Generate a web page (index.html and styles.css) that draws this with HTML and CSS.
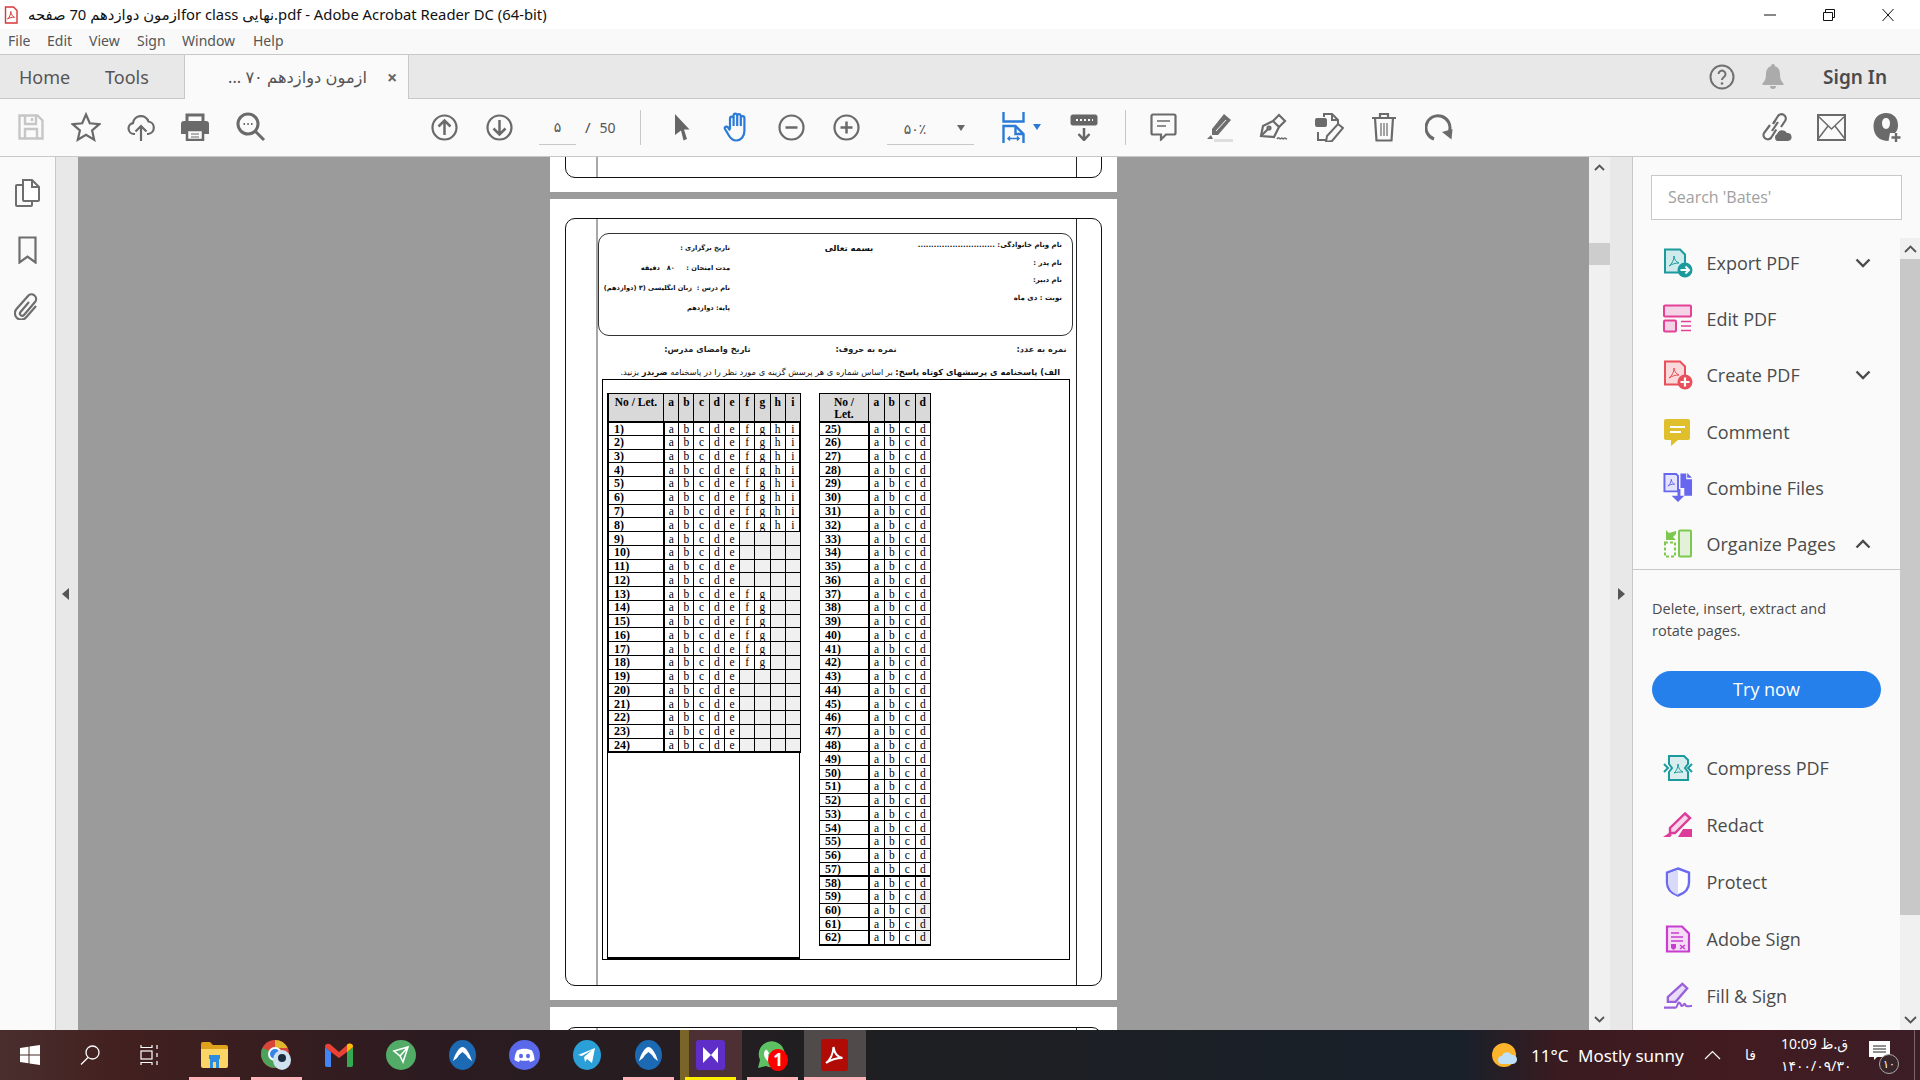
FILE: index.html
```html
<!DOCTYPE html>
<html lang="en">
<head>
<meta charset="utf-8">
<title>Adobe Acrobat Reader DC</title>
<link rel="stylesheet" href="styles.css">
</head>
<body>
<div class="app">
  <header class="titlebar">
    <svg class="title-icon" width="14" height="18" viewBox="0 0 14 18"><path d="M1.5 1h8l3.500 3.500V17h-11.500z" fill="#fff" stroke="#d8363a" stroke-width="1.400"/><path d="M3.500 13c2-1.500 3.200-4.500 3.300-7.500.5 3 1.700 5 3.700 5.800-2.500-.3-5 .3-7 1.700z" fill="none" stroke="#d8363a"/></svg>
    <span class="title-text">ازمون دوازدهم 70 صفحهfor class نهایی.pdf - Adobe Acrobat Reader DC (64-bit)</span>
    <div class="win-controls">
      <svg width="14" height="12" viewBox="0 0 14 12"><path d="M1 6h12" stroke="#111" fill="none"/></svg>
      <svg width="14" height="12" viewBox="0 0 14 12"><path d="M1.500 3.500h9v8h-9zM3.500 3.500v-3h9v8h-2" stroke="#111" fill="none"/></svg>
      <svg width="14" height="12" viewBox="0 0 14 12"><path d="M1.500 0l11 12M12.500 0l-11 12" stroke="#111" fill="none"/></svg>
    </div>
  </header>

  <nav class="menubar">
    <span class="m-file">File</span><span class="m-edit">Edit</span><span class="m-view">View</span><span class="m-sign">Sign</span><span class="m-window">Window</span><span>Help</span>
  </nav>

  <div class="tabbar">
    <span class="nav-home">Home</span>
    <span class="nav-tools">Tools</span>
    <div class="doc-tab"><span class="doc-name" dir="rtl">ازمون دوازدهم ۷۰ ...</span><span class="doc-close">×</span></div>
    <div class="tab-right">
      <svg width="26" height="26" viewBox="0 0 26 26"><circle cx="13" cy="13" r="11.500" fill="none" stroke="#707070" stroke-width="2"/><path d="M9.500 10a3.500 3.500 0 1 1 5.500 3c-1.300.9-2 1.500-2 3" fill="none" stroke="#707070" stroke-width="2"/><circle cx="13" cy="19.500" r="1.300" fill="#707070"/></svg>
      <svg class="bell" width="22" height="26" viewBox="0 0 22 26"><path d="M11 0c1.300 0 2 1 2 2.200 3.500 1 5 4 5 8 0 5 1.500 7 3.500 9.300v1.500H.5v-1.500C2.500 17.200 4 15.200 4 10.200c0-4 1.500-7 5-8C9 1 9.700 0 11 0z" fill="#ababab"/><path d="M8 22h6a3 3 0 0 1-6 0z" fill="#ababab"/></svg>
      <span class="sign-in">Sign In</span>
    </div>
  </div>

  <div class="toolbar">
    <span class="tb"><svg width="28" height="28" viewBox="0 0 28 28" class="ic-off"><path d="M2.500 2.500h18l5 5v18h-23z"/><path d="M8 2.500V11h11V2.500M8 25.500V16h12v9.500M15 5v3"/></svg></span>
    <span class="tb"><svg width="30" height="30" viewBox="0 0 30 30" class="ic"><path d="M15 2.500l3.800 8.800 9.500.9-7.200 6.300 2.100 9.300-8.200-4.900-8.200 4.900 2.100-9.300-7.200-6.300 9.500-.9z"/></svg></span>
    <span class="tb"><svg width="28" height="30" viewBox="0 0 28 30" class="ic"><path d="M8 22H7a5.500 5.500 0 0 1-1-10.900A8 8 0 0 1 21.500 9.500 6.300 6.300 0 0 1 21 22h-1"/><path d="M14 29V14M8.500 19.500l5.500-5.500 5.500 5.500"/></svg></span>
    <span class="tb tb-print"><svg width="28" height="28" viewBox="0 0 28 28"><path d="M6 9V2h16v7" fill="none" stroke="#6a6a6a" stroke-width="3"/><path d="M3 8h22a3 3 0 0 1 3 3v10h-5v-5H5v5H0V11a3 3 0 0 1 3-3z" fill="#6a6a6a"/><path d="M6 17h16v10H6z" fill="#fafafa" stroke="#6a6a6a" stroke-width="2.500"/><path d="M10 21h8M10 24h8" stroke="#6a6a6a"/></svg></span>
    <span class="tb"><svg width="30" height="30" viewBox="0 0 30 30" class="ic ic-heavy"><circle cx="12" cy="12" r="10"/><path d="M19 19l9 9"/><path d="M7.500 12h1.500M11.300 12h1.500M15 12h1.500" stroke-width="2"/></svg></span>
    <span class="tb gap-nav"><svg width="27" height="27" viewBox="0 0 27 27" class="ic"><circle cx="13.500" cy="13.500" r="12"/><path d="M13.500 21V7M7.500 12.500l6-6 6 6" stroke-width="2.500"/></svg></span>
    <span class="tb"><svg width="27" height="27" viewBox="0 0 27 27" class="ic"><circle cx="13.500" cy="13.500" r="12"/><path d="M13.500 6v14M7.500 14.500l6 6 6-6" stroke-width="2.500"/></svg></span>
    <div class="page-box"><span class="page-num">۵</span></div>
    <span class="page-total">/</span><span class="page-count">50</span>
    <span class="tb-divider divider-a"></span>
    <span class="tb"><svg width="16" height="27" viewBox="0 0 16 27"><path d="M1 0l14.500 15.500H10l3 9.500-3.500 1.500-2.500-10L1 21z" fill="#666"/></svg></span>
    <span class="tb"><svg width="28" height="30" viewBox="0 0 28 30" fill="none" stroke="#2b7bd6" stroke-width="2.200"><path d="M7 17V6.500a1.800 1.800 0 0 1 3.600 0M10.600 14V3.500a1.800 1.800 0 0 1 3.600 0V14M14.200 4a1.800 1.800 0 0 1 3.600 0v10M17.800 6a1.800 1.800 0 0 1 3.600 0v13c0 5.500-3.500 9.500-8 9.500-3.500 0-5.500-1.500-7.500-5L2 17c-1-2 1.500-3.500 3-1.500L7 18.500"/></svg></span>
    <span class="tb"><svg width="27" height="27" viewBox="0 0 27 27" class="ic"><circle cx="13.500" cy="13.500" r="12"/><path d="M7.500 13.500h12" stroke-width="2.500"/></svg></span>
    <span class="tb"><svg width="27" height="27" viewBox="0 0 27 27" class="ic"><circle cx="13.500" cy="13.500" r="12"/><path d="M7.500 13.500h12M13.500 7.500v12" stroke-width="2.500"/></svg></span>
    <div class="zoom-box"><span class="zoom-val">۵۰٪</span><span class="caret"></span></div>
    <span class="fit"><svg width="23" height="31" viewBox="0 0 23 31" fill="none" stroke="#2b7bd6" stroke-width="2.400"><path d="M1.500 0v9.500h20V0"/><path d="M1.500 31V14h12l8 8v9M13.500 14v8h8"/><path d="M6 26.500h11M8 24.500l-2 2 2 2M15 24.500l2 2-2 2" stroke-width="1.500"/></svg><span class="caret caret-blue"></span></span>
    <span class="tb read"><svg width="28" height="27" viewBox="0 0 28 27" fill="none" stroke="#666"><rect x="1" y="1" width="26" height="10" rx="1.500" fill="#666"/><path d="M6 6h2M10 6h2M14 6h2M18 6h2M22 6h1" stroke="#fafafa" stroke-width="2"/><path d="M14 14v12M8.500 20l5.500 6 5.500-6" stroke-width="2.500"/></svg></span>
    <span class="tb-divider divider-b"></span>
    <span class="tb"><svg width="27" height="28" viewBox="0 0 27 28" class="ic"><path d="M3 1.500h21a1.500 1.500 0 0 1 1.500 1.500v17a1.500 1.500 0 0 1-1.500 1.500h-8L11 26.500v-5H3A1.500 1.500 0 0 1 1.500 20V3A1.500 1.500 0 0 1 3 1.500z"/><path d="M7 8h13M7 13h9" stroke-width="1.500"/></svg></span>
    <span class="tb"><svg width="29" height="29" viewBox="0 0 29 29"><path d="M20 1l7 6-13 15h-6v-6z" fill="#6e6e6e"/><path d="M7 22l-4 4h6z" fill="#6e6e6e"/><path d="M10 26h19v3H10z" fill="#dedede"/><path d="M22 7L12 18" stroke="#fafafa"/></svg></span>
    <span class="tb"><svg width="29" height="29" viewBox="0 0 29 29" class="ic"><path d="M2 23l2-10 10-5 6 6-5 10z"/><path d="M14 8l6-6 6 6-6 6M2 23l7-7"/><circle cx="10" cy="15" r="1.500"/><path d="M18 26c2-3 2.500 1 4-.5s1.500 1.500 3 0 1 1 3 0" stroke-width="1.500"/></svg></span>
    <span class="tb"><svg width="30" height="30" viewBox="0 0 30 30"><path d="M10 5V2h8l6 6v4M4 20v8h9" fill="none" stroke="#6a6a6a" stroke-width="2"/><path d="M18 2v6h6" fill="none" stroke="#6a6a6a" stroke-width="2"/><rect x="1" y="6" width="12" height="9" rx="2" fill="#6a6a6a"/><path d="M24 12l5 4-11 13-6 1 1-6z" fill="#fafafa" stroke="#6a6a6a" stroke-width="2"/></svg></span>
    <span class="tb"><svg width="26" height="30" viewBox="0 0 26 30" class="ic"><path d="M1 6h24M9 6V2h8v4M4 6l1.500 22.500h15L22 6"/><path d="M10 11v13M13 11v13M16 11v13" stroke-width="1.200"/></svg></span>
    <span class="tb"><svg width="28" height="28" viewBox="0 0 28 28"><path d="M9 26A12 12 0 1 1 24.500 18" fill="none" stroke="#6a6a6a" stroke-width="3"/><path d="M17 19l10.500-3-1 10.500z" fill="#6a6a6a"/></svg></span>
    <div class="tb-right">
      <span class="tb"><svg width="31" height="30" viewBox="0 0 31 30"><g fill="none" stroke="#6a6a6a" stroke-width="2.200"><path d="M12 12l5-8a4.300 4.300 0 0 1 7.300 4.500L20 15"/><path d="M14 9l-1.500 2M9 13l-6 8a4.300 4.300 0 0 0 7.300 4.500l5-8"/><path d="M11 19l6-9"/></g><path d="M16 29a4 4 0 0 1 0-7 5.500 5.500 0 0 1 10-1 4 4 0 0 1 1 8z" fill="#6a6a6a"/></svg></span>
      <span class="tb"><svg width="29" height="27" viewBox="0 0 29 27" fill="none" stroke="#6a6a6a" stroke-width="2"><rect x="1" y="1" width="27" height="25"/><path d="M1 2l13.500 13L28 2M1 25l10-13M28 25L18 12" stroke-width="1.500"/></svg></span>
      <span class="tb"><svg width="29" height="31" viewBox="0 0 29 31"><path d="M14 1c7 0 12 4.800 12 12 0 3.500-1 6.500-3 8h-5l-1.500 8C8 29 1.500 24 1.500 14 1.500 6 7 1 14 1z" fill="#6a6a6a"/><path d="M14 6c2.500 0 4 2 4 5s-1.500 6-4 6-4-3-4-6 1.500-5 4-5z" fill="#fafafa"/><path d="M24 21v9M19.500 25.500h9" stroke="#6a6a6a" stroke-width="2.400"/></svg></span>
    </div>
  </div>

  <main class="workspace">
    <aside class="rail">
      <svg width="25" height="28" viewBox="0 0 25 28" fill="none" stroke="#6e6e6e" stroke-width="2"><path d="M8 6H2a1 1 0 0 0-1 1v19a1 1 0 0 0 1 1h14a1 1 0 0 0 1-1v-4"/><path d="M8 1h9l7 7v13a1 1 0 0 1-1 1H9a1 1 0 0 1-1-1z" fill="#fff"/><path d="M17 1v7h7"/></svg>
      <svg width="19" height="28" viewBox="0 0 19 28" fill="none" stroke="#6e6e6e" stroke-width="2.200"><path d="M1.500 1.500h16v25l-8-6-8 6z"/></svg>
      <svg width="26" height="27" viewBox="0 0 26 27" fill="none" stroke="#6e6e6e" stroke-width="2.200"><path d="M15 9L6.500 19a2.300 2.300 0 0 0 3.500 3l11-13a4.500 4.500 0 0 0-7-6L2.500 16a6.300 6.300 0 0 0 9.500 8.500L22 13"/></svg>
    </aside>
    <div class="side-strip"><span class="arrow-left"></span></div>

    <section class="viewer">
      <div class="page page-top"><div class="frame"><div class="frame-in"></div></div></div>

      <div class="page page-main">
        <div class="frame">
          <div class="frame-in">
            <div class="head-box" dir="rtl">
              <div class="head-col">
                <p>نام ونام خانوادگی: .............................</p>
                <p>نام پدر :</p>
                <p>نام دبیر:</p>
                <p>نوبت : دی ماه</p>
              </div>
              <div class="head-mid">بسمه تعالی</div>
              <div class="head-col head-left">
                <p>تاریخ برگزاری :</p>
                <p>مدت امتحان :&nbsp;&nbsp;&nbsp;&nbsp;&nbsp;۸۰&nbsp;&nbsp;&nbsp;دقیقه</p>
                <p>نام درس :&nbsp;&nbsp;زبان انگلیسی (۳ (دوازدهم)</p>
                <p>پایه: دوازدهم</p>
              </div>
            </div>
            <div class="score-line" dir="rtl"><span>نمره به عدد:</span><span>نمره به حروف:</span><span>تاریخ وامضای مدرس:</span></div>
            <p class="instr" dir="rtl"><b>الف) پاسخنامه ی پرسشهای کوتاه پاسخ:</b> بر اساس شماره ی هر پرسش گزینه ی مورد نظر را در پاسخنامه <b>ضربدر</b> بزنید.</p>
            <div class="sheet">
              <div class="sheet-left">
                <table class="answers answers-a">
                  <thead><tr><th>No / Let.</th><th>a</th><th>b</th><th>c</th><th>d</th><th>e</th><th>f</th><th>g</th><th>h</th><th>i</th></tr></thead>
                  <tbody>
                    <tr><th>1)</th><td>a</td><td>b</td><td>c</td><td>d</td><td>e</td><td>f</td><td>g</td><td>h</td><td>i</td></tr>
                    <tr><th>2)</th><td>a</td><td>b</td><td>c</td><td>d</td><td>e</td><td>f</td><td>g</td><td>h</td><td>i</td></tr>
                    <tr><th>3)</th><td>a</td><td>b</td><td>c</td><td>d</td><td>e</td><td>f</td><td>g</td><td>h</td><td>i</td></tr>
                    <tr><th>4)</th><td>a</td><td>b</td><td>c</td><td>d</td><td>e</td><td>f</td><td>g</td><td>h</td><td>i</td></tr>
                    <tr><th>5)</th><td>a</td><td>b</td><td>c</td><td>d</td><td>e</td><td>f</td><td>g</td><td>h</td><td>i</td></tr>
                    <tr><th>6)</th><td>a</td><td>b</td><td>c</td><td>d</td><td>e</td><td>f</td><td>g</td><td>h</td><td>i</td></tr>
                    <tr><th>7)</th><td>a</td><td>b</td><td>c</td><td>d</td><td>e</td><td>f</td><td>g</td><td>h</td><td>i</td></tr>
                    <tr><th>8)</th><td>a</td><td>b</td><td>c</td><td>d</td><td>e</td><td>f</td><td>g</td><td>h</td><td>i</td></tr>
                    <tr><th>9)</th><td>a</td><td>b</td><td>c</td><td>d</td><td>e</td><td class="x"></td><td class="x"></td><td class="x"></td><td class="x"></td></tr>
                    <tr><th>10)</th><td>a</td><td>b</td><td>c</td><td>d</td><td>e</td><td class="x"></td><td class="x"></td><td class="x"></td><td class="x"></td></tr>
                    <tr><th>11)</th><td>a</td><td>b</td><td>c</td><td>d</td><td>e</td><td class="x"></td><td class="x"></td><td class="x"></td><td class="x"></td></tr>
                    <tr><th>12)</th><td>a</td><td>b</td><td>c</td><td>d</td><td>e</td><td class="x"></td><td class="x"></td><td class="x"></td><td class="x"></td></tr>
                    <tr><th>13)</th><td>a</td><td>b</td><td>c</td><td>d</td><td>e</td><td>f</td><td>g</td><td class="x"></td><td class="x"></td></tr>
                    <tr><th>14)</th><td>a</td><td>b</td><td>c</td><td>d</td><td>e</td><td>f</td><td>g</td><td class="x"></td><td class="x"></td></tr>
                    <tr><th>15)</th><td>a</td><td>b</td><td>c</td><td>d</td><td>e</td><td>f</td><td>g</td><td class="x"></td><td class="x"></td></tr>
                    <tr><th>16)</th><td>a</td><td>b</td><td>c</td><td>d</td><td>e</td><td>f</td><td>g</td><td class="x"></td><td class="x"></td></tr>
                    <tr><th>17)</th><td>a</td><td>b</td><td>c</td><td>d</td><td>e</td><td>f</td><td>g</td><td class="x"></td><td class="x"></td></tr>
                    <tr><th>18)</th><td>a</td><td>b</td><td>c</td><td>d</td><td>e</td><td>f</td><td>g</td><td class="x"></td><td class="x"></td></tr>
                    <tr><th>19)</th><td>a</td><td>b</td><td>c</td><td>d</td><td>e</td><td class="x"></td><td class="x"></td><td class="x"></td><td class="x"></td></tr>
                    <tr><th>20)</th><td>a</td><td>b</td><td>c</td><td>d</td><td>e</td><td class="x"></td><td class="x"></td><td class="x"></td><td class="x"></td></tr>
                    <tr><th>21)</th><td>a</td><td>b</td><td>c</td><td>d</td><td>e</td><td class="x"></td><td class="x"></td><td class="x"></td><td class="x"></td></tr>
                    <tr><th>22)</th><td>a</td><td>b</td><td>c</td><td>d</td><td>e</td><td class="x"></td><td class="x"></td><td class="x"></td><td class="x"></td></tr>
                    <tr><th>23)</th><td>a</td><td>b</td><td>c</td><td>d</td><td>e</td><td class="x"></td><td class="x"></td><td class="x"></td><td class="x"></td></tr>
                    <tr><th>24)</th><td>a</td><td>b</td><td>c</td><td>d</td><td>e</td><td class="x"></td><td class="x"></td><td class="x"></td><td class="x"></td></tr>
                  </tbody>
                </table>
              </div>
              <table class="answers answers-b">
                <thead><tr><th>No / Let.</th><th>a</th><th>b</th><th>c</th><th>d</th></tr></thead>
                <tbody>
                  <tr><th>25)</th><td>a</td><td>b</td><td>c</td><td>d</td></tr>
                  <tr><th>26)</th><td>a</td><td>b</td><td>c</td><td>d</td></tr>
                  <tr><th>27)</th><td>a</td><td>b</td><td>c</td><td>d</td></tr>
                  <tr><th>28)</th><td>a</td><td>b</td><td>c</td><td>d</td></tr>
                  <tr><th>29)</th><td>a</td><td>b</td><td>c</td><td>d</td></tr>
                  <tr><th>30)</th><td>a</td><td>b</td><td>c</td><td>d</td></tr>
                  <tr><th>31)</th><td>a</td><td>b</td><td>c</td><td>d</td></tr>
                  <tr><th>32)</th><td>a</td><td>b</td><td>c</td><td>d</td></tr>
                  <tr><th>33)</th><td>a</td><td>b</td><td>c</td><td>d</td></tr>
                  <tr><th>34)</th><td>a</td><td>b</td><td>c</td><td>d</td></tr>
                  <tr><th>35)</th><td>a</td><td>b</td><td>c</td><td>d</td></tr>
                  <tr><th>36)</th><td>a</td><td>b</td><td>c</td><td>d</td></tr>
                  <tr><th>37)</th><td>a</td><td>b</td><td>c</td><td>d</td></tr>
                  <tr><th>38)</th><td>a</td><td>b</td><td>c</td><td>d</td></tr>
                  <tr><th>39)</th><td>a</td><td>b</td><td>c</td><td>d</td></tr>
                  <tr><th>40)</th><td>a</td><td>b</td><td>c</td><td>d</td></tr>
                  <tr><th>41)</th><td>a</td><td>b</td><td>c</td><td>d</td></tr>
                  <tr><th>42)</th><td>a</td><td>b</td><td>c</td><td>d</td></tr>
                  <tr><th>43)</th><td>a</td><td>b</td><td>c</td><td>d</td></tr>
                  <tr><th>44)</th><td>a</td><td>b</td><td>c</td><td>d</td></tr>
                  <tr><th>45)</th><td>a</td><td>b</td><td>c</td><td>d</td></tr>
                  <tr><th>46)</th><td>a</td><td>b</td><td>c</td><td>d</td></tr>
                  <tr><th>47)</th><td>a</td><td>b</td><td>c</td><td>d</td></tr>
                  <tr><th>48)</th><td>a</td><td>b</td><td>c</td><td>d</td></tr>
                  <tr><th>49)</th><td>a</td><td>b</td><td>c</td><td>d</td></tr>
                  <tr><th>50)</th><td>a</td><td>b</td><td>c</td><td>d</td></tr>
                  <tr><th>51)</th><td>a</td><td>b</td><td>c</td><td>d</td></tr>
                  <tr><th>52)</th><td>a</td><td>b</td><td>c</td><td>d</td></tr>
                  <tr><th>53)</th><td>a</td><td>b</td><td>c</td><td>d</td></tr>
                  <tr><th>54)</th><td>a</td><td>b</td><td>c</td><td>d</td></tr>
                  <tr><th>55)</th><td>a</td><td>b</td><td>c</td><td>d</td></tr>
                  <tr><th>56)</th><td>a</td><td>b</td><td>c</td><td>d</td></tr>
                  <tr><th>57)</th><td>a</td><td>b</td><td>c</td><td>d</td></tr>
                  <tr class="thick"><th>58)</th><td>a</td><td>b</td><td>c</td><td>d</td></tr>
                  <tr><th>59)</th><td>a</td><td>b</td><td>c</td><td class="x">d</td></tr>
                  <tr><th>60)</th><td>a</td><td>b</td><td>c</td><td class="x">d</td></tr>
                  <tr><th>61)</th><td>a</td><td>b</td><td>c</td><td class="x">d</td></tr>
                  <tr><th>62)</th><td>a</td><td>b</td><td>c</td><td class="x">d</td></tr>
                </tbody>
              </table>
            </div>
          </div>
        </div>
      </div>

      <div class="page page-next"><div class="frame"><div class="frame-in"></div></div></div>
    </section>

    <div class="scroll scroll-doc">
      <span class="scroll-btn"><svg width="11" height="7" viewBox="0 0 11 7"><path d="M1 6l4.500-4.500L10 6" fill="none" stroke="#555" stroke-width="1.800"/></svg></span>
      <span class="doc-thumb"></span>
      <span class="scroll-btn scroll-btn-end"><svg width="11" height="7" viewBox="0 0 11 7"><path d="M1 1l4.500 4.500L10 1" fill="none" stroke="#555" stroke-width="1.800"/></svg></span>
    </div>
    <div class="side-strip side-strip-r"><span class="arrow-right"></span></div>

    <aside class="tools-pane">
      <div class="search-box">Search 'Bates'</div>
      <div class="tools-body">
        <div class="tools-list">
          <div class="tool"><svg width="30" height="30" viewBox="0 0 30 30"><path d="M2 1.500h15l5 5v18H2z" fill="#cfeaea" stroke="#1b9a9e" stroke-width="2"/><path d="M6 18c3-2 5-6 5-10 .5 3.500 2 6 5 7-3.500 0-7 1-10 3z" fill="none" stroke="#1b9a9e"/><circle cx="22" cy="22" r="7.500" fill="#1b9a9e"/><path d="M17.500 22h8M22.500 18.500l3.500 3.500-3.500 3.500" fill="none" stroke="#fff" stroke-width="2"/></svg><span>Export PDF</span><svg class="chev" width="16" height="10" viewBox="0 0 16 10"><path d="M1.500 1.500L8 8l6.500-6.500" fill="none" stroke="#4b4b4b" stroke-width="2.400"/></svg></div>
          <div class="tool"><svg width="30" height="30" viewBox="0 0 30 30"><rect x="1" y="1.500" width="27" height="11" rx="1" fill="#f5d3e6" stroke="#e34195" stroke-width="2"/><rect x="1" y="16.500" width="12" height="11" rx="1" fill="#f5d3e6" stroke="#e34195" stroke-width="2"/><path d="M18 17.500h10M18 22h10M18 26.500h10" stroke="#e34195" stroke-width="1.500"/></svg><span>Edit PDF</span></div>
          <div class="tool"><svg width="30" height="30" viewBox="0 0 30 30"><path d="M2 1.500h15l5 5v18H2z" fill="#f9d9da" stroke="#e8505b" stroke-width="2"/><path d="M6 18c3-2 5-6 5-10 .5 3.500 2 6 5 7-3.500 0-7 1-10 3z" fill="none" stroke="#e8505b"/><circle cx="22" cy="22" r="7.500" fill="#e8505b"/><path d="M17.500 22h9M22 17.500v9" stroke="#fff" stroke-width="2.200"/></svg><span>Create PDF</span><svg class="chev" width="16" height="10" viewBox="0 0 16 10"><path d="M1.500 1.500L8 8l6.500-6.500" fill="none" stroke="#4b4b4b" stroke-width="2.400"/></svg></div>
          <div class="tool"><svg width="30" height="30" viewBox="0 0 30 30"><path d="M3 2h22a2 2 0 0 1 2 2v17a2 2 0 0 1-2 2H15l-7 6v-6H3a2 2 0 0 1-2-2V4a2 2 0 0 1 2-2z" fill="#e0bf2c"/><path d="M7 10h15M7 15h11" stroke="#fff" stroke-width="2.200"/></svg><span>Comment</span></div>
          <div class="tool"><svg width="31" height="31" viewBox="0 0 31 31"><path d="M1.500 1.500h12l2 2v16h-14z" fill="#e4e4fc" stroke="#6666ee" stroke-width="2"/><path d="M5 14c2-1.500 3.500-4 3.500-7 .3 2.500 1.500 4.500 3.500 5-2.500 0-5 .7-7 2z" fill="none" stroke="#6666ee"/><path d="M18 1h6v6h6v17h-8v-8h-4z" fill="#6666ee"/><path d="M25 .5L30 5.500h-5z" fill="#6666ee"/><path d="M15 17v7h-6l6.500 6.500L22 24h-4v-7z" fill="#6666ee"/></svg><span>Combine Files</span></div>
          <div class="tool"><svg width="30" height="30" viewBox="0 0 30 30"><rect x="16" y="1.500" width="12" height="26" rx="1" fill="#e3f1da" stroke="#7ec850" stroke-width="2"/><path d="M2 13.500h10v14H2z" fill="none" stroke="#7ec850" stroke-width="2" stroke-dasharray="3 2"/><path d="M13 2l-7 2 -3-3v10h10l-3-3 3-3z" fill="#7ec850"/></svg><span>Organize Pages</span><svg class="chev" width="16" height="10" viewBox="0 0 16 10"><path d="M1.500 8.500L8 2l6.500 6.500" fill="none" stroke="#4b4b4b" stroke-width="2.400"/></svg></div>
        </div>
        <div class="tools-rule"></div>
        <p class="tool-desc">Delete, insert, extract and<br>rotate pages.</p>
        <div class="try-btn">Try now</div>
        <div class="tools-list tools-list-b">
          <div class="tool"><svg width="30" height="28" viewBox="0 0 30 28"><path d="M6 2h15l4 4v4l-3 4 3 4v8H6v-8l3-4-3-4z" fill="#d8eeee" stroke="#1b9a9e" stroke-width="2"/><path d="M11 19c2-1.500 4-5 4-9 .4 4 2 7 5 8-3 0-6 0-9 1z" fill="none" stroke="#1b9a9e"/><path d="M1 10l4 4-4 4M29 10l-4 4 4 4" fill="none" stroke="#1b9a9e" stroke-width="2"/></svg><span>Compress PDF</span></div>
          <div class="tool"><svg width="30" height="26" viewBox="0 0 30 26"><path d="M22 1.500l5 4.500L12 21H7v-5z" fill="#f8d5e8" stroke="#dd3a99" stroke-width="2.400"/><path d="M15 25l5-8h9v8zM0 25l6-4 3 2-2 2z" fill="#dd3a99"/></svg><span>Redact</span></div>
          <div class="tool"><svg width="26" height="30" viewBox="0 0 26 30"><path d="M13 1.500l11 4v10c0 7-5 11-11 13-6-2-11-6-11-13v-10z" fill="#fff" stroke="#6b6bf0" stroke-width="2.400"/><path d="M13 3v25c-5-2-9.500-5.500-9.500-12.500V6.500z" fill="#d9d9fa"/></svg><span>Protect</span></div>
          <div class="tool"><svg width="26" height="28" viewBox="0 0 26 28"><path d="M2 1.500h15l7 7v18H2z" fill="#f5dcf7" stroke="#c83dd0" stroke-width="2.200"/><path d="M6 8h8M6 12h12M6 16h12" stroke="#c83dd0" stroke-width="1.400"/><path d="M6 19h5v4l-2.500 2L6 23z" fill="#c83dd0"/><path d="M15 20l5 4M20 20l-5 4" stroke="#c83dd0" stroke-width="1.600"/></svg><span>Adobe Sign</span></div>
          <div class="tool"><svg width="31" height="28" viewBox="0 0 31 28"><path d="M20 1.500l5 4.500L13 20H5v-5z" fill="#e8dcf8" stroke="#9a60dc" stroke-width="2.400"/><path d="M1 26h12c2 0 2-6 4-5s1 4 3 3 2-3 3-1 2 2 7 1" fill="none" stroke="#9a60dc" stroke-width="2.200"/></svg><span>Fill &amp; Sign</span></div>
        </div>
        <div class="scroll scroll-tools">
          <span class="scroll-btn"><svg width="13" height="8" viewBox="0 0 13 8"><path d="M1 7l5.500-5.500L12 7" fill="none" stroke="#555" stroke-width="1.800"/></svg></span>
          <span class="tools-thumb"></span>
          <span class="scroll-btn scroll-btn-end"><svg width="13" height="8" viewBox="0 0 13 8"><path d="M1 1l5.500 5.500L12 1" fill="none" stroke="#555" stroke-width="1.800"/></svg></span>
        </div>
      </div>
    </aside>
  </main>

  <footer class="taskbar">
    <span class="sys"><svg width="20" height="20" viewBox="0 0 20 20" fill="#fff"><path d="M0 3l8.500-1.300V9.500H0zM9.500 1.500L20 0v9.500H9.500zM0 10.500h8.500v7.800L0 17zM9.500 10.500H20V20L9.500 18.500z"/></svg></span>
    <span class="sys"><svg width="20" height="20" viewBox="0 0 20 20" fill="none" stroke="#fff" stroke-width="1.300"><circle cx="12.500" cy="7.500" r="6.500"/><path d="M8 12.500L1 19.500"/></svg></span>
    <span class="sys"><svg width="20" height="20" viewBox="0 0 20 20" fill="none" stroke="#fff" stroke-width="1.200"><path d="M1 0v2.500h11V0M1 20v-2.500h11V20"/><rect x="1" y="6" width="11" height="8"/><path d="M17 0v4M17 8v4M17 16v4"/></svg></span>
    <span class="app-slot open first-app"><svg width="27" height="26" viewBox="0 0 27 26"><path d="M0 2a2 2 0 0 1 2-2h7l3 3h13a2 2 0 0 1 2 2v4H0z" fill="#e0a21b"/><path d="M0 7h27v17a2 2 0 0 1-2 2H2a2 2 0 0 1-2-2z" fill="#fbd666"/><path d="M9 26V15h9v11h-3v-6h-3v6z" fill="#2c8ce0"/><path d="M8 13h11v4H8z" fill="#2c8ce0"/></svg></span>
    <span class="app-slot open"><svg width="31" height="32" viewBox="0 0 31 32"><circle cx="14" cy="15" r="14" fill="#d9453a"/><path d="M1.500 9A14 14 0 0 0 14 29l7-12z" fill="#4ba25a"/><path d="M14 1a14 14 0 0 1 12.500 8H14z" fill="#e0b62e"/><circle cx="14" cy="15" r="6" fill="#3b82e8" stroke="#fff" stroke-width="2"/><ellipse cx="21" cy="21" rx="9" ry="10" fill="#cfe2ef"/><ellipse cx="21" cy="19" rx="4" ry="4" fill="#1c2d3f"/></svg></span>
    <span class="app-slot"><svg width="28" height="24" viewBox="0 0 28 24"><path d="M0 4v18a2 2 0 0 0 2 2h4V9z" fill="#4285f4"/><path d="M28 4v18a2 2 0 0 1-2 2h-4V9z" fill="#34a853"/><path d="M0 4c0-4 4-4 6-2l8 7 8-7c2-2 6-2 6 2L22 9l-8 6-8-6z" fill="#ea4335"/><path d="M22 1.500c2-1.500 6-1.500 6 2.500l-6 5z" fill="#fbbc04"/></svg></span>
    <span class="app-slot"><svg width="30" height="30" viewBox="0 0 30 30"><circle cx="15" cy="15" r="15" fill="#52ac68"/><path d="M8 11l14-4-5 15-3-6z M14 16l8-9" fill="none" stroke="#fff" stroke-width="1.600"/></svg></span>
    <span class="app-slot"><svg width="27" height="30" viewBox="0 0 27 30"><ellipse cx="13.500" cy="15" rx="13.500" ry="15" fill="#1c69b4"/><path d="M4 21C6 14 10 7 13.500 7S21 14 23 21l-4-3-2-3-3.500-3-3.500 3-2 3z" fill="#fff"/></svg></span>
    <span class="app-slot"><svg width="31" height="30" viewBox="0 0 31 30"><ellipse cx="15.500" cy="15" rx="15.500" ry="15" fill="#5a68ea"/><path d="M8 10.500c4.500-2.500 10.500-2.500 15 0 1.500 3 2.500 6 2.500 9.500-1.500 1-3 1.600-4.500 2l-1-1.700c-3 .7-6 .7-9 0L10 22c-1.500-.4-3-1-4.500-2 0-3.500 1-6.500 2.500-9.500z" fill="#fff"/><ellipse cx="12" cy="16" rx="2" ry="2.300" fill="#5a68ea"/><ellipse cx="19" cy="16" rx="2" ry="2.300" fill="#5a68ea"/></svg></span>
    <span class="app-slot"><svg width="28" height="30" viewBox="0 0 28 30"><ellipse cx="14" cy="15" rx="14" ry="15" fill="#2a9fd8"/><path d="M5 15l17-7-3 15-5-4-2 3-1-5 8-7-10 6z" fill="#fff"/></svg></span>
    <span class="app-slot open"><svg width="27" height="30" viewBox="0 0 27 30"><ellipse cx="13.500" cy="15" rx="13.500" ry="15" fill="#1c69b4"/><path d="M4 21C6 14 10 7 13.500 7S21 14 23 21l-4-3-2-3-3.500-3-3.500 3-2 3z" fill="#fff"/></svg></span>
    <span class="app-slot open app-vs"><svg width="29" height="30" viewBox="0 0 29 30"><rect width="29" height="30" rx="3" fill="#5f2ec8"/><path d="M7 7l8 8-8 8zM15 15l7-8v16z" fill="#fff"/></svg></span>
    <span class="app-slot open"><svg width="32" height="32" viewBox="0 0 32 32"><path d="M1 29l2-8A13 13 0 1 1 9 27z" fill="#5cc163"/><path d="M7 15c0-3 2-5 3-4l2 3-1 2c1 2 2.500 3.500 4.500 4l2-1 3 2c0 2-2 3-4 3-5 0-9.500-4.500-9.500-9z" fill="#fff"/><ellipse cx="21" cy="21" rx="10" ry="11" fill="#f00"/><text x="21" y="27" class="badge-text">1</text></svg></span>
    <span class="app-slot open app-active"><svg width="27" height="32" viewBox="0 0 27 32"><rect width="27" height="32" rx="3" fill="#b00b05"/><path d="M5 24c4-3 7-9 7.500-16 .8 6 3.500 10 9 11-6 0-11.500 1.500-16.500 5z" fill="none" stroke="#fff" stroke-width="2"/></svg></span>
    <div class="tray">
      <svg class="weather" width="26" height="24" viewBox="0 0 26 24"><circle cx="12" cy="12" r="12" fill="#fbb42c"/><path d="M10 21a4 4 0 0 1 0-8 5.500 5.500 0 0 1 10-1 4.500 4.500 0 0 1 1 9z" fill="#bfe0f6"/></svg>
      <span class="temp">11°C</span>
      <span class="cond">Mostly sunny</span>
      <svg class="tray-up" width="17" height="10" viewBox="0 0 17 10"><path d="M1 9l7.500-7.500L16 9" fill="none" stroke="#fff" stroke-width="1.200"/></svg>
      <span class="lang">فا</span>
      <div class="clock"><span>10:09 ق.ظ</span><span>۱۴۰۰/۰۹/۳۰</span></div>
      <span class="notify"><svg width="21" height="19" viewBox="0 0 21 19"><path d="M0 0h21v16H8l-3 3v-3H0z" fill="#fff"/><path d="M4 5h13M4 8h13M4 11h13" stroke="#222"/></svg><span class="notify-count">۱۰</span></span>
      <span class="show-desktop"></span>
    </div>
  </footer>
</div>
</body>
</html>
```

FILE: styles.css
```css
* { box-sizing: border-box; }
html, body { margin: 0; height: 100%; overflow: hidden; }
body { font-family: "Noto Sans", "DejaVu Sans", sans-serif; color: #4b4b4b; }
p { margin: 0; }
.app { width: 1920px; height: 1080px; display: flex; flex-direction: column; overflow: hidden; }

/* title */
.titlebar { height: 29px; background: #fff; display: flex; align-items: center; flex: none; color: #111; font-size: 14.800px; }
.title-icon { margin-left: 4px; margin-right: 10px; }
.title-text { white-space: nowrap; padding-bottom: 1px; }
.win-controls { margin-left: auto; display: flex; gap: 45px; padding-right: 25px; }
.menubar { height: 26px; flex: none; background: #f9f9f9; border-bottom: 1px solid #c8c8c8; padding: 0 0 2px 8px; display: flex; align-items: center; font-size: 14px; color: #555; }
.m-file { width: 39px; } .m-edit { width: 42px; } .m-view { width: 48px; } .m-sign { width: 45px; } .m-window { width: 71px; }

/* tabs */
.tabbar { height: 44px; flex: none; background: #e8e8e8; border-bottom: 1px solid #c8c8c8; display: flex; align-items: center; font-size: 18px; color: #555; }
.nav-home { width: 105px; padding-left: 19px; }
.nav-tools { width: 79px; }
.doc-tab { width: 225px; height: 44px; align-self: flex-start; background: #fafafa; border-left: 1px solid #c8c8c8; border-right: 1px solid #c8c8c8; display: flex; align-items: center; font-size: 16.300px; padding-left: 26px; }
.doc-name { width: 156px; white-space: nowrap; }
.doc-close { margin-left: 20px; font-size: 18px; font-weight: 700; color: #666; }
.tab-right { margin-left: auto; display: flex; align-items: center; padding-right: 33px; }
.bell { margin-left: 27px; }
.sign-in { margin-left: 39px; font-size: 19px; font-weight: 600; color: #4b4b4b; }

/* toolbar */
.toolbar { height: 58px; flex: none; background: #fafafa; border-bottom: 1px solid #c8c8c8; display: flex; align-items: center; padding-left: 3.500px; padding-bottom: 1px; }
.tb { width: 55px; display: flex; justify-content: center; align-items: center; flex: none; }
.tb-print { padding-right: 3px; }
.ic { fill: none; stroke: #6a6a6a; stroke-width: 2.200; }
.ic-heavy { stroke-width: 3; }
.ic-off { fill: none; stroke: #c6c6c6; stroke-width: 2.400; }
.gap-nav { margin-left: 138px; }
.page-box { width: 37px; margin-left: 12.500px; height: 32px; border-bottom: 1px solid #c8c8c8; margin-top: 3px; text-align: center; font-size: 14px; line-height: 28px; color: #555; }
.page-total { margin-left: 9px; font-size: 15px; }
.page-count { margin-left: 9px; font-size: 14px; color: #555; }
.tb-divider { width: 1px; height: 35px; background: #c8c8c8; flex: none; }
.divider-a { margin-left: 24px; margin-right: 13.500px; }
.zoom-box { width: 87px; height: 32px; margin-left: 12.500px; margin-top: 3px; border-bottom: 1px solid #c8c8c8; display: flex; align-items: center; padding-left: 17px; font-size: 14px; color: #555; }
.zoom-val { width: 53px; }
.caret { width: 0; height: 0; border-left: 4.500px solid transparent; border-right: 4.500px solid transparent; border-top: 6px solid #666; }
.fit { display: flex; align-items: center; margin-left: 28px; width: 45px; flex: none; }
.caret-blue { border-top-color: #2b7bd6; margin-left: 8px; }
.read { margin-left: 9.500px; }
.divider-b { margin-left: 13.500px; margin-right: 10.500px; }
.tb-right { margin-left: auto; display: flex; padding-right: 6.500px; }

/* workspace */
.workspace { height: 873px; flex: none; display: flex; overflow: hidden; }
.rail { width: 56px; flex: none; background: #fafafa; border-right: 1px solid #c8c8c8; display: flex; flex-direction: column; align-items: center; padding-top: 22px; padding-right: 1px; gap: 29px; }
.side-strip { width: 22px; flex: none; background: #e8e8e8; display: flex; align-items: center; justify-content: center; }
.side-strip-r { border-right: 1px solid #c8c8c8; width: 23px; }
.arrow-left { border-top: 6px solid transparent; border-bottom: 6px solid transparent; border-right: 7px solid #555; margin-left: -4px; }
.arrow-right { border-top: 6px solid transparent; border-bottom: 6px solid transparent; border-left: 7px solid #555; }
.viewer { width: 1511px; flex: none; background: #9b9b9b; display: flex; flex-direction: column; align-items: center; gap: 7px; overflow: hidden; }

/* document pages */
.page { width: 567px; background: #fff; flex: none; overflow: hidden; font-family: "Liberation Serif", "DejaVu Sans", serif; color: #000; }
.page-top { height: 35px; }
.page-top .frame { height: 60px; margin-top: -39px; }
.page-main { height: 801px; padding-top: 19px; }
.page-next { height: 40px; padding-top: 20px; }
.page-next .frame { height: 60px; }
.frame { margin-left: 15px; width: 537px; height: 768px; border: 1px solid #111; border-radius: 10px; padding: 0 24px 0 30px; }
.frame-in { height: 100%; border-left: 2px solid #a8a8a8; border-right: 1px solid #222; padding: 14px 3px 0 0; }
.head-box { height: 103px; border: 1px solid #333; border-radius: 11px; display: grid; grid-template-columns: 180px 66px 1fr; padding: 3px 10px 0 0; font-size: 7px; font-weight: 700; font-family: "DejaVu Sans", serif; color: #111; }
.head-col p { height: 17.500px; line-height: 17px; white-space: nowrap; }
.head-left { padding-right: 86px; padding-top: 1px; font-size: 6.600px; }
.head-left p { height: 20px; line-height: 20px; }
.head-mid { font-size: 8.500px; font-weight: 700; text-align: center; line-height: 22px; white-space: nowrap; }
.score-line { display: grid; grid-template-columns: 170px 146px 1fr; padding-right: 6.500px; font-size: 8.200px; font-family: "DejaVu Sans", serif; height: 25px; margin-top: 1px; line-height: 24px; font-weight: 700; color: #222; }
.instr { font-size: 8.300px; font-family: "DejaVu Sans", serif; padding-right: 13px; height: 17px; line-height: 20px; white-space: nowrap; color: #111; }
.sheet { margin-left: 4px; margin-right: 3px; height: 581px; border: 1px solid #000; display: flex; padding: 13px 0 0 4px; gap: 19px; }
.sheet-left { width: 193px; height: 566px; border-left: 1px solid #000; border-right: 1px solid #000; border-bottom: 2px solid #000; }
.answers { border-collapse: collapse; table-layout: fixed; font-size: 11.500px; line-height: 12px; }
.answers-a { width: 193px; }
.answers-a th:first-child { width: 55px; }
.answers-b { width: 112px; align-self: flex-start; }
.answers-b th:first-child { width: 49px; }
.answers th, .answers td { border: 1px solid #000; padding: 0; height: 13.770px; overflow: hidden; text-align: center; font-weight: 400; }
.answers thead th { background: #d9d9d9; height: 28px; vertical-align: top; font-weight: 700; border-bottom-width: 2px; font-size: 11.500px; padding-top: 2px; }
.answers-a thead th:first-child { padding: 2px 1px 0; }
.answers-b thead th:first-child { padding: 2px 8px 0; }
.answers tbody th { text-align: left; font-weight: 700; padding-left: 5px; border-right-width: 2px; font-size: 12px; }
.answers .x { background: #f0f0f0; }
.answers tbody tr:last-child th, .answers tbody tr:last-child td { border-bottom-width: 2px; }
.answers .thick th, .answers .thick td { border-top-width: 2px; }

/* doc scrollbar */
.scroll { background: #f0f0f0; display: flex; flex-direction: column; flex: none; }
.scroll-doc { width: 21px; }
.scroll-btn { height: 21px; display: flex; align-items: center; justify-content: center; flex: none; }
.scroll-btn-end { margin-top: auto; }
.doc-thumb { height: 22px; background: #cdcdcd; margin-top: 65px; }

/* tools pane */
.tools-pane { width: 287px; flex: none; background: #fafafa; padding-top: 18px; display: flex; flex-direction: column; font-family: "Open Sans", "Noto Sans", sans-serif; }
.search-box { width: 251px; height: 45px; margin-left: 18px; background: #fff; border: 1px solid #c8c8c8; font-size: 16px; color: #a0a0a0; line-height: 43px; padding-left: 16px; flex: none; }
.tools-body { position: relative; margin-top: 18px; flex: 1; width: 267px; }
.tools-list { margin-top: -3px; }
.tool { height: 56.200px; display: flex; align-items: center; padding-left: 30px; padding-right: 29px; font-size: 18px; color: #4b4b4b; }
.tool > svg:first-child { width: 30px; flex: none; margin-right: 13.500px; }
.chev { margin-left: auto; }
.tools-rule { height: 1px; background: #c8c8c8; margin-top: -3px; }
.tool-desc { font-size: 14.500px; line-height: 22px; margin: 28px 0 0 19px; color: #4b4b4b; }
.try-btn { width: 229px; height: 37px; margin: 29px 0 0 19px; border-radius: 19px; background: #2680eb; color: #fff; font-size: 18px; text-align: center; line-height: 37px; }
.tools-list-b { margin-top: 31px; }
.tools-list-b .tool { height: 57px; }
.scroll-tools { position: absolute; left: 267px; top: 0; bottom: 0; width: 20px; }
.tools-thumb { height: 656px; background: #c8c8c8; }

/* taskbar */
.taskbar { height: 50px; flex: none; display: flex; align-items: center; background: linear-gradient(90deg, #4a2e2e 0, #42201f 120px, #2c1b20 420px, #1f1f22 870px, #18202a 1460px, #3a1b20 1560px, #421b20 1720px, #3c1e26 1920px); }
.sys { width: 60px; display: flex; justify-content: center; flex: none; }
.app-slot { width: 62px; height: 50px; display: flex; align-items: center; justify-content: center; flex: none; position: relative; }
.first-app { margin-left: 3.500px; }
.app-slot.open::after { content: ""; position: absolute; left: 5.500px; right: 5.500px; bottom: 0; height: 3px; background: #ffb3b8; }
.app-vs { background: #4d3034; }
.app-vs::before { content: ""; position: absolute; left: 0; top: 0; bottom: 0; width: 9px; background: #7a6428; }
.app-vs svg { position: relative; }
.app-slot.app-vs::after { left: 5px; right: 6px; background: #ffee00; }
.app-active { background: #504a4a; }
.app-slot.app-active::after { left: 0; right: 0; }
.badge-text { fill: #fff; font: 700 17px "Noto Sans", sans-serif; text-anchor: middle; }
.tray { margin-left: auto; display: flex; align-items: center; color: #fff; height: 50px; font-size: 17px; white-space: nowrap; }
.temp { margin-left: 13px; width: 47px; }
.cond { width: 126px; }
.lang { font-size: 14px; margin-left: 24px; width: 36px; font-family: "DejaVu Sans", sans-serif; }
.clock { display: flex; flex-direction: column; font-size: 14px; line-height: 22px; width: 88px; }
.clock span { text-align: left; }
.notify { position: relative; width: 45px; height: 36px; padding-top: 4px; display: block; }
.notify-count { position: absolute; left: 10px; top: 17px; width: 20px; height: 20px; border-radius: 50%; border: 1px solid #aaa; background: #39262b; font-size: 11px; line-height: 17px; text-align: center; }
.show-desktop { width: 1px; height: 50px; background: #7a6468; margin-right: 5px; }
```
